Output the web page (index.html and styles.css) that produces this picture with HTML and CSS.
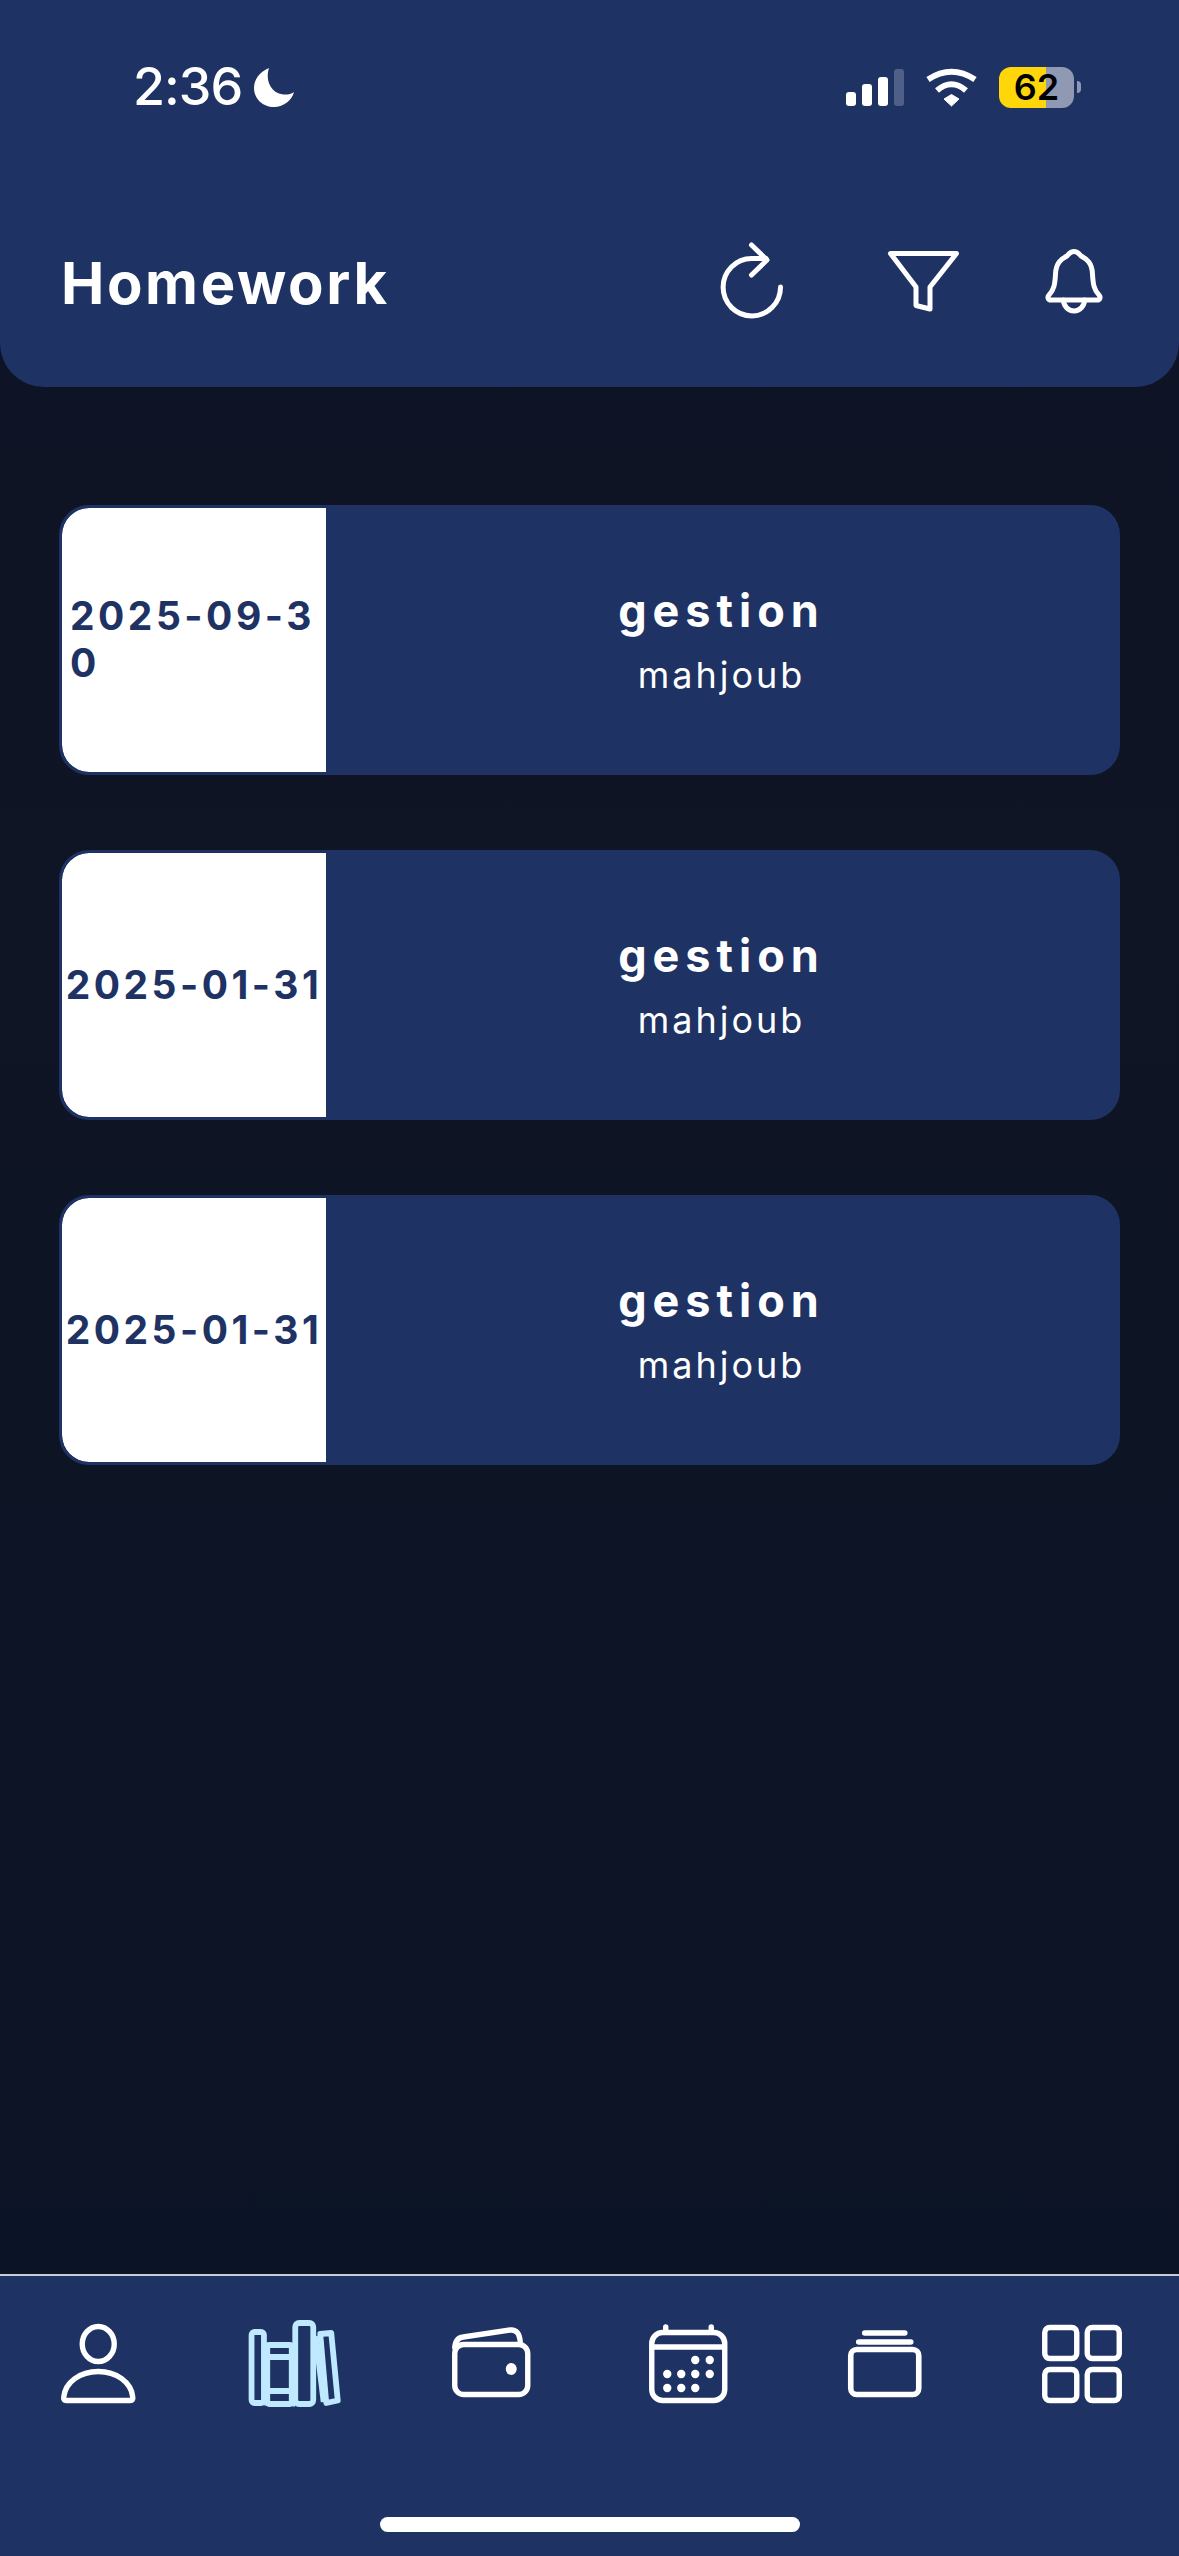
FILE: index.html
```html
<!DOCTYPE html>
<html lang="en">
<head>
<meta charset="utf-8">
<title>Homework</title>
<link rel="stylesheet" href="styles.css">
</head>
<body>
<header class="header">
  <div class="status">
    <div class="status-left">
      <span class="time">2:36</span>
      <svg class="moon" width="40" height="39" viewBox="0 0 40 39"><path d="M15 0C5 4 0 12 0 20C0 31 9 39 20 39C30 39 38 32 40 24C36 27 31 27 27 26C17 24 11 12 15 0Z" fill="#fff"/></svg>
    </div>
    <div class="status-right">
      <div class="signal">
        <span class="bar bar-1"></span><span class="bar bar-2"></span><span class="bar bar-3"></span><span class="bar bar-4"></span>
      </div>
      <svg class="wifi" width="51" height="37" viewBox="0 0 51 37"><path d="M2 10.5Q25.5 -5 49 10.5M11 21.5Q25.5 9 40 21.5" fill="none" stroke="#fff" stroke-width="6" stroke-linecap="butt"/><path d="M18 30L25.5 25.5L33 30L25.5 37Z" fill="#fff" stroke="#fff" stroke-width="1" stroke-linejoin="round"/></svg>
      <div class="battery"><span class="battery-body">62</span><span class="battery-tip"></span></div>
    </div>
  </div>
  <div class="title-row">
    <h1 class="title">Homework</h1>
    <div class="actions">
      <svg class="action action-refresh" width="72" height="84" viewBox="0 0 72 84" fill="none" stroke="#fff" stroke-width="5" stroke-linecap="round" stroke-linejoin="round"><path d="M65.5 48A28.7 28.7 0 1 1 36.7 19.5H51"/><path d="M36.5 6L52 21L36.5 36"/></svg>
      <svg class="action action-filter" width="78" height="68" viewBox="0 0 78 68" fill="none" stroke="#fff" stroke-width="5" stroke-linecap="round" stroke-linejoin="round"><path d="M5.5 5.5H71.5L45 39V61L31 57.5V39Z"/></svg>
      <svg class="action action-bell" width="68" height="72" viewBox="0 0 68 72" fill="none" stroke="#fff" stroke-width="5" stroke-linecap="round" stroke-linejoin="round"><path d="M34 6.5C38 6.5 39 9 41 11C47 14 52 18 52.5 29C53 39 54 45 59 50C61 52 60 55 57 55H11C8 55 7 52 9 50C14 45 15 39 15.5 29C16 18 21 14 27 11C29 9 30 6.5 34 6.5Z"/><path d="M23.5 55A10.5 11 0 0 0 44.5 55"/></svg>
    </div>
  </div>
</header>

<main class="list">
  <article class="card">
    <div class="date"><span class="date-text date-long">2025-09-30</span></div>
    <div class="info"><div class="subject">gestion</div><div class="teacher">mahjoub</div></div>
  </article>
  <article class="card">
    <div class="date"><span class="date-text">2025-01-31</span></div>
    <div class="info"><div class="subject">gestion</div><div class="teacher">mahjoub</div></div>
  </article>
  <article class="card">
    <div class="date"><span class="date-text">2025-01-31</span></div>
    <div class="info"><div class="subject">gestion</div><div class="teacher">mahjoub</div></div>
  </article>
</main>

<footer class="tabbar">
  <nav class="tabs">
    <svg class="tab" width="100" height="100" viewBox="0 0 100 100" fill="none" stroke="#fff" stroke-width="5.4" stroke-linejoin="round"><ellipse cx="50" cy="34" rx="16" ry="17.5"/><path d="M15.5 87C17 72 32 61.5 50 61.5S83 72 84.5 87Q85 90.5 82 90.5H18Q15 90.5 15.5 87Z"/></svg>
    <svg class="tab" width="100" height="100" viewBox="0 0 100 100" fill="none" stroke="#bfe9ff" stroke-width="5.8" stroke-linejoin="round"><rect x="6.3" y="22" width="12.4" height="71" rx="3"/><rect x="22" y="35" width="24.5" height="59" rx="2"/><path d="M22 47H47M22 81H47"/><path d="M19 35H22M19 93H22M47 35H50M47 94H50" stroke-width="5"/><rect x="50" y="13" width="18" height="81" rx="4"/><path d="M75 24L86 23L92.5 90.5L81 93Z"/><path d="M70 26L78 92" stroke-width="5"/></svg>
    <svg class="tab" width="100" height="100" viewBox="0 0 100 100" fill="none" stroke="#fff" stroke-width="5.4" stroke-linecap="round" stroke-linejoin="round"><rect x="13.5" y="34.5" width="73" height="50" rx="9"/><path d="M13.5 38Q14 28 22 27L69 20Q78 19 79 32"/><ellipse cx="70" cy="59" rx="5.5" ry="6" fill="#fff" stroke="none"/></svg>
    <svg class="tab" width="100" height="100" viewBox="0 0 100 100" fill="none" stroke="#fff" stroke-width="5.4" stroke-linecap="round"><rect x="13.5" y="22.5" width="73" height="68" rx="11"/><path d="M13.5 37H86.5" stroke-linecap="butt"/><path d="M27.5 17V22M73 17V22"/><g fill="#fff" stroke="none"><circle cx="57" cy="50" r="4.2"/><circle cx="71.5" cy="50" r="4.2"/><circle cx="29" cy="64" r="4.2"/><circle cx="43" cy="64" r="4.2"/><circle cx="57" cy="64" r="4.2"/><circle cx="71.5" cy="64" r="4.2"/><circle cx="29" cy="78" r="4.2"/><circle cx="43" cy="78" r="4.2"/><circle cx="57" cy="78" r="4.2"/></g></svg>
    <svg class="tab" width="100" height="100" viewBox="0 0 100 100" fill="none" stroke="#fff" stroke-width="5.6" stroke-linecap="round"><rect x="16.5" y="39.5" width="68" height="45" rx="6"/><path d="M30.5 23H70.5M24.5 32H76.5"/></svg>
    <svg class="tab" width="100" height="100" viewBox="0 0 100 100" fill="none" stroke="#fff" stroke-width="5.4"><rect x="13.5" y="17.5" width="32" height="31" rx="5"/><rect x="56" y="17.5" width="32" height="31" rx="5"/><rect x="13.5" y="59.5" width="32" height="31" rx="5"/><rect x="56" y="59.5" width="32" height="31" rx="5"/></svg>
  </nav>
  <div class="home-indicator"></div>
</footer>
</body>
</html>
```
FILE: styles.css
```css
* { box-sizing: border-box; }
html, body { margin: 0; padding: 0; }
body {
  width: 1179px;
  height: 2556px;
  display: flex;
  flex-direction: column;
  background: linear-gradient(#0d1325, #0f1524 35%, #0a1326);
  font-family: Inter, "Liberation Sans", sans-serif;
  overflow: hidden;
}
.header {
  height: 387px;
  flex: none;
  background: #1e3263;
  border-radius: 0 0 44px 44px;
}
.status {
  display: flex;
  justify-content: space-between;
  align-items: center;
  height: 42px;
  margin-top: 66px;
  padding: 0 98px 0 133px;
}
.status-left { display: flex; align-items: center; gap: 12px; }
.time { font-size: 52px; font-weight: 500; color: #fff; line-height: 42px; letter-spacing: -1px; }
.status-right { display: flex; align-items: center; gap: 22px; }
.signal { display: flex; align-items: flex-end; gap: 6px; height: 37px; }
.bar { width: 10px; background: #fff; border-radius: 3px; }
.bar-1 { height: 14px; }
.bar-2 { height: 22px; }
.bar-3 { height: 29px; }
.bar-4 { height: 37px; background: #4f5f88; }
.wifi { overflow: visible; }
.battery { display: flex; align-items: center; gap: 3px; }
.battery-body {
  width: 75px;
  height: 41px;
  border-radius: 12px;
  background: linear-gradient(90deg, #ffd60a 63%, #8f99b4 63%);
  color: #000;
  font-size: 36px;
  font-weight: 600;
  line-height: 41px;
  text-align: center;
}
.battery-tip {
  width: 4px;
  height: 12px;
  background: #8f99b4;
  border-radius: 0 6px 6px 0;
}
.title-row {
  display: flex;
  justify-content: space-between;
  align-items: center;
  height: 90px;
  margin-top: 130px;
  padding: 0 71px 0 61px;
}
.title { margin: 0; font-size: 58px; font-weight: 700; color: #fff; letter-spacing: 2.6px; }
.actions { display: flex; align-items: center; }
.action { display: block; }
.action-refresh { margin: -5px 98px 0 0; }
.action-filter { margin: -2px 77px 0 0; }
.action-bell { margin: -4px 0 0 0; }

.list {
  flex: 1;
  display: flex;
  flex-direction: column;
  gap: 75px;
  padding: 118px 59px 0 59px;
}
.card {
  display: flex;
  height: 270px;
  background: #1e3263;
  border: 3px solid #1e3263;
  border-radius: 30px;
  overflow: hidden;
}
.date {
  flex: none;
  width: 264px;
  display: flex;
  align-items: center;
  justify-content: center;
  padding-bottom: 2px;
  background: #fff;
  border-radius: 27px 0 0 27px;
}
.date-text {
  display: block;
  font-size: 39px;
  font-weight: 700;
  line-height: 47px;
  letter-spacing: 3.5px;
  color: #1e3263;
  white-space: nowrap;
}
.date-long { width: 248px; white-space: normal; word-break: break-all; }
.info {
  flex: 1;
  display: flex;
  flex-direction: column;
  align-items: center;
  justify-content: center;
  color: #fff;
}
.subject { font-size: 45px; font-weight: 700; letter-spacing: 6px; line-height: 54px; }
.teacher { font-size: 36px; font-weight: 400; letter-spacing: 3px; line-height: 44px; margin-top: 15px; }

.tabbar {
  flex: none;
  height: 282px;
  background: #1e3263;
  border-top: 2px solid #c9ccd2;
  padding-top: 34px;
}
.tabs { display: flex; }
.tab { flex: 1 1 0; display: block; height: 100px; }
.home-indicator {
  width: 420px;
  height: 15px;
  margin: 107px auto 0;
  background: #fff;
  border-radius: 8px;
}
```
